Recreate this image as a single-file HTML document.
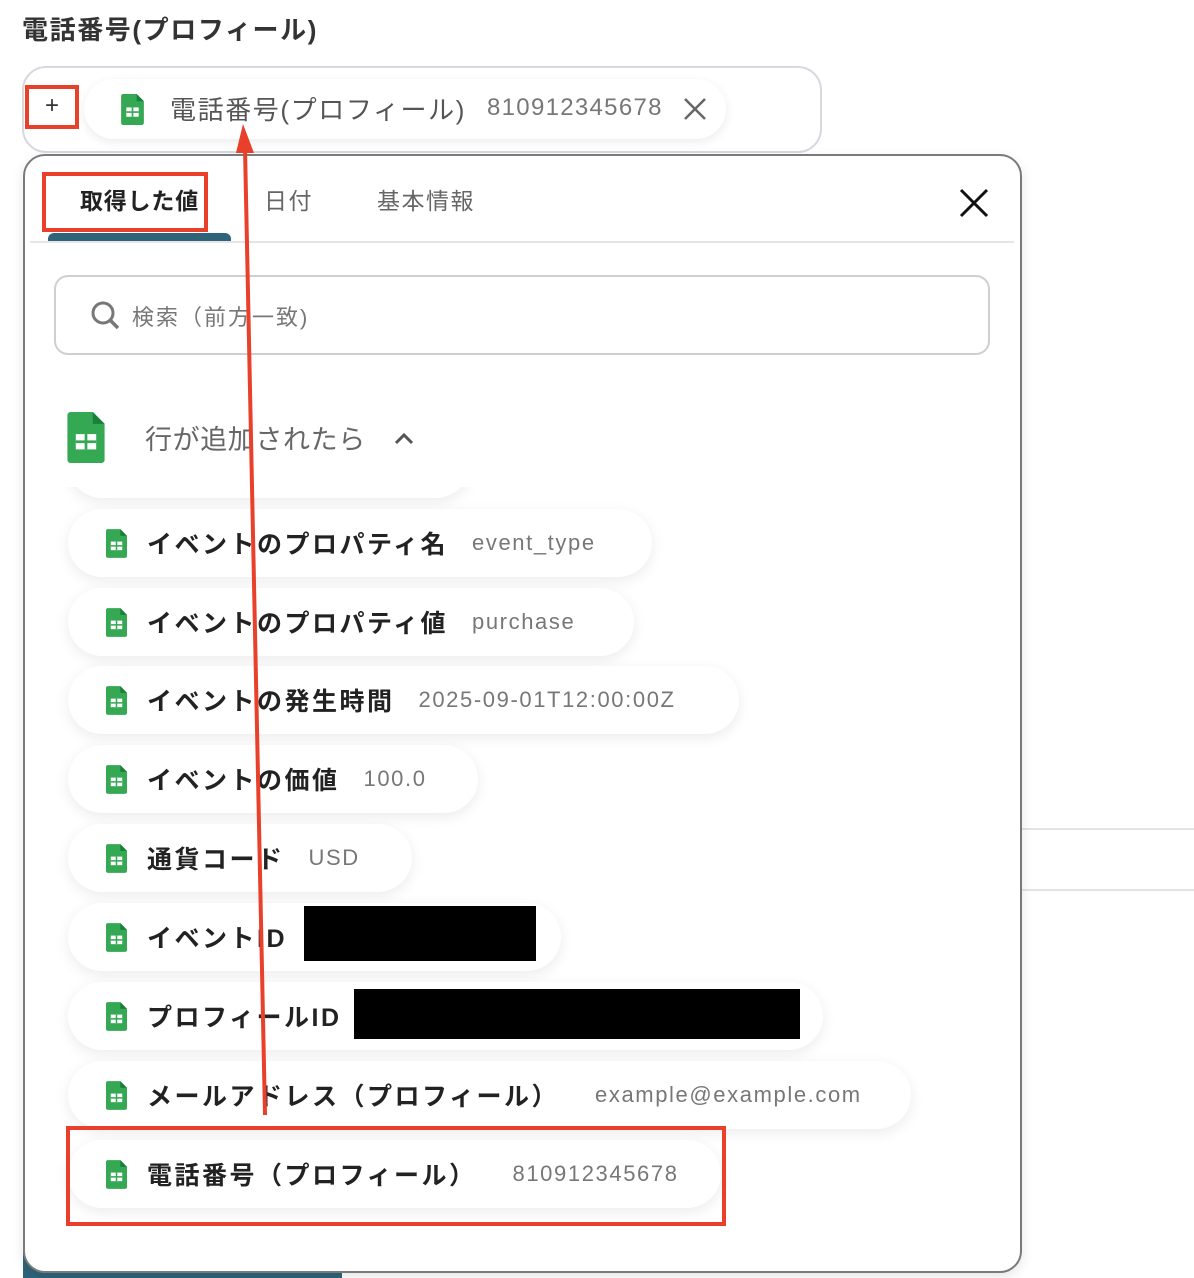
<!DOCTYPE html>
<html><head><meta charset="utf-8"><style>
*{margin:0;padding:0;box-sizing:border-box}
body{width:1194px;height:1278px;background:#fff;position:relative;overflow:hidden;font-family:"Liberation Sans","Noto Sans CJK JP",sans-serif;color:#222}
.a{position:absolute}
.chip{position:absolute;left:68px;height:68px;background:#fff;border-radius:34px;box-shadow:0 4px 14px rgba(0,0,0,0.08);display:flex;align-items:center;white-space:nowrap}
.chip .ic{margin-left:38px;margin-right:20px}
.chip b{font-size:25px;font-weight:bold;color:#222;letter-spacing:2.5px}
.chip span{font-size:22px;color:#777;margin-left:24px;letter-spacing:1.6px}
</style></head><body>
<svg width="0" height="0" style="position:absolute"><defs>
<symbol id="sh" viewBox="0 0 22 30"><path d="M2 0H15L22 7V28a2 2 0 0 1-2 2H2a2 2 0 0 1-2-2V2a2 2 0 0 1 2-2z" fill="#34a853"/><path d="M15 0V7H22z" fill="#188038"/><rect x="5" y="13" width="12" height="9" fill="#fff"/><path d="M5 17.5H17M11 13V22" stroke="#34a853" stroke-width="1.6"/></symbol>
</defs></svg>
<div class="a" style="left:22px;top:10px;font-size:26px;font-weight:bold;color:#333;letter-spacing:1.6px">電話番号(プロフィール)</div>
<div class="a" style="left:22px;top:66px;width:800px;height:87px;border:2px solid #d6d9de;border-radius:24px"></div>
<div class="a" style="left:84px;top:79px;width:642px;height:60px;background:#fff;border-radius:30px;box-shadow:0 3px 10px rgba(0,0,0,0.08)"></div>
<div class="a" style="left:25px;top:85px;width:54px;height:44px;border:4px solid #e8402a;font-size:24px;color:#333;text-align:center;line-height:34px">+</div>
<svg class="a" style="left:121px;top:94px" width="23" height="31"><use href="#sh"/></svg>
<div class="a" style="left:170px;top:90px;font-size:26px;color:#555;letter-spacing:1.6px">電話番号(プロフィール)</div>
<div class="a" style="left:487px;top:94px;font-size:24px;color:#777;letter-spacing:1.3px">810912345678</div>
<svg class="a" style="left:683px;top:97px" width="24" height="24"><path d="M2 2L22 22M22 2L2 22" stroke="#666" stroke-width="2.5"/></svg>
<div class="a" style="left:1021px;top:828px;width:173px;height:2px;background:#e3e3e3"></div>
<div class="a" style="left:1021px;top:889px;width:173px;height:2px;background:#e3e3e3"></div>
<div class="a" style="left:23px;top:1250px;width:319px;height:28px;background:#2e647a"></div>
<div class="a" style="left:23px;top:154px;width:999px;height:1119px;border:2px solid #7a7a7a;border-radius:22px;background:#fff;box-shadow:0 4px 12px rgba(0,0,0,0.1)"></div>
<div class="a" style="left:80px;top:182px;font-size:23px;font-weight:bold;color:#222;letter-spacing:0.8px">取得した値</div>
<div class="a" style="left:264px;top:182px;font-size:23px;color:#666;letter-spacing:1.5px">日付</div>
<div class="a" style="left:377px;top:182px;font-size:23px;color:#666;letter-spacing:1.5px">基本情報</div>
<div class="a" style="left:42px;top:172px;width:166px;height:60px;border:4px solid #e8402a"></div>
<div class="a" style="left:48px;top:233px;width:183px;height:9px;background:#2e647a;border-radius:6px 6px 0 0"></div>
<div class="a" style="left:30px;top:241px;width:984px;height:2px;background:#e5e5e5"></div>
<svg class="a" style="left:959px;top:188px" width="30" height="30"><path d="M2 2L28 28M28 2L2 28" stroke="#111" stroke-width="3"/></svg>
<div class="a" style="left:54px;top:275px;width:936px;height:80px;border:2px solid #cfcfcf;border-radius:14px"></div>
<svg class="a" style="left:90px;top:300px" width="32" height="32"><circle cx="13" cy="13" r="10" fill="none" stroke="#777" stroke-width="3"/><path d="M20 20L28 28" stroke="#777" stroke-width="3.5"/></svg>
<div class="a" style="left:132px;top:300px;font-size:22px;color:#777;letter-spacing:2px">検索（前方一致)</div>
<div class="chip" style="top:430px;width:402px"></div>
<div class="a" style="left:30px;top:400px;width:980px;height:87px;background:#fff"></div>
<svg class="a" style="left:67px;top:412px" width="38" height="51" viewBox="0 0 22 30"><use href="#sh"/></svg>
<div class="a" style="left:145px;top:418px;font-size:27px;color:#666;letter-spacing:0.6px">行が追加されたら</div>
<svg class="a" style="left:393px;top:430px" width="22" height="16"><path d="M3 13L11 5L19 13" fill="none" stroke="#555" stroke-width="3"/></svg>

<div class="chip" style="top:509px;width:584px"><svg class="ic" width="21" height="31"><use href="#sh"/></svg><b>イベントのプロパティ名</b><span>event_type</span></div>
<div class="chip" style="top:588px;width:566px"><svg class="ic" width="21" height="31"><use href="#sh"/></svg><b>イベントのプロパティ値</b><span>purchase</span></div>
<div class="chip" style="top:666px;width:671px"><svg class="ic" width="21" height="31"><use href="#sh"/></svg><b>イベントの発生時間</b><span>2025-09-01T12:00:00Z</span></div>
<div class="chip" style="top:745px;width:410px"><svg class="ic" width="21" height="31"><use href="#sh"/></svg><b>イベントの価値</b><span>100.0</span></div>
<div class="chip" style="top:824px;width:344px"><svg class="ic" width="21" height="31"><use href="#sh"/></svg><b>通貨コード</b><span>USD</span></div>
<div class="chip" style="top:903px;width:493px"><svg class="ic" width="21" height="31"><use href="#sh"/></svg><b>イベントID</b></div>
<div class="a" style="left:304px;top:906px;width:232px;height:55px;background:#000"></div>
<div class="chip" style="top:982px;width:755px"><svg class="ic" width="21" height="31"><use href="#sh"/></svg><b>プロフィールID</b></div>
<div class="a" style="left:354px;top:989px;width:446px;height:50px;background:#000"></div>
<div class="chip" style="top:1061px;width:843px"><svg class="ic" width="21" height="31"><use href="#sh"/></svg><b>メールアドレス（プロフィール）</b><span style="margin-left:36px">example@example.com</span></div>
<div class="chip" style="top:1140px;width:653px"><svg class="ic" width="21" height="31"><use href="#sh"/></svg><b>電話番号（プロフィール）</b><span style="margin-left:36px">810912345678</span></div>
<div class="a" style="left:66px;top:1126px;width:660px;height:100px;border:4px solid #e8402a"></div>
<svg class="a" style="left:0;top:0" width="1194" height="1278"><line x1="265" y1="1115" x2="245" y2="148" stroke="#e8402a" stroke-width="4"/><path d="M236 153L243 124L254 153z" fill="#e8402a"/></svg>
</body></html>
